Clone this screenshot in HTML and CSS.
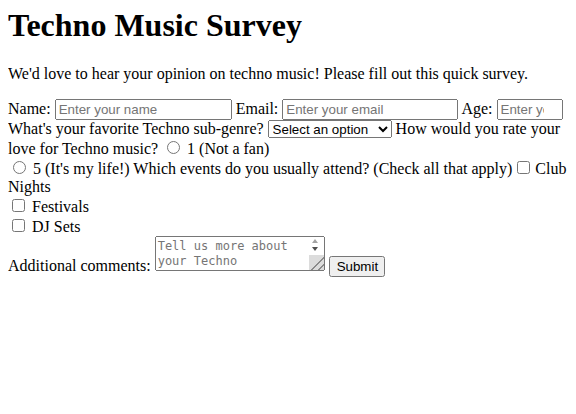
FILE: index.html
```html
<!DOCTYPE html>
<html>
<head>
<meta charset="utf-8">
<title>Techno Music Survey</title>
<link rel="stylesheet" href="styles.css">
</head>
<body>
<h1>Techno Music Survey</h1>
<p>We'd love to hear your opinion on techno music! Please fill out this quick survey.</p>
<form>
<label for="name">Name:</label> <input type="text" id="name" class="name" placeholder="Enter your name"> <label for="email">Email:</label> <input type="email" id="email" class="email" placeholder="Enter your email"> <label for="age">Age:</label> <input type="number" id="age" class="age" placeholder="Enter your age">
<label for="genre">What's your favorite Techno sub-genre?</label> <select id="genre" class="genre"><option>Select an option</option><option>Detroit</option><option>Minimal</option></select>
<label>How would you rate your love for Techno music?</label> <input type="radio" name="rate" id="r1"> <label for="r1">1 (Not a fan)</label><br>
<input type="radio" name="rate" id="r5"> <label for="r5">5 (It's my life!)</label>
<label>Which events do you usually attend? (Check all that apply)</label> <input type="checkbox" id="c1" class="tight"> <label for="c1">Club Nights</label><br>
<input type="checkbox" id="c2"> <label for="c2">Festivals</label><br>
<input type="checkbox" id="c3"> <label for="c3">DJ Sets</label><br>
<label for="comments">Additional comments:</label> <textarea id="comments" class="comments" placeholder="Tell us more about your Techno experience..."></textarea><span class="sb-anchor"><span class="sb-up"></span><span class="sb-down"></span></span> <button type="submit" class="submit">Submit</button>
</form>
</body>
</html>
```
FILE: styles.css
```css
body {
  margin: 7px 8px 8px;
  font-family: "Liberation Serif", "Times New Roman", serif;
}
h1 {
  margin-top: 0;
}
input, select, button {
  font-family: "Liberation Sans", Arial, sans-serif;
  box-sizing: border-box;
}
.name {
  width: 177px;
  height: 21px;
}
.email {
  width: 176px;
  height: 21px;
}
.age {
  width: 66px;
  height: 21px;
}
.genre {
  width: 124px;
  height: 18px;
}
.tight {
  margin-left: 1px;
  margin-right: 1px;
}
.comments {
  box-sizing: border-box;
  width: 170px;
  height: 35px;
  font-family: "DejaVu Sans Mono", "Liberation Mono", monospace;
  font-size: 12px;
  line-height: 15px;
  overflow-y: scroll;
}
.comments::placeholder {
  color: #757575;
}
.comments::-webkit-scrollbar {
  width: 15px;
  background: #f0f0f0;
}
.comments::-webkit-scrollbar-track {
  background: linear-gradient(#f0f0f0 16px, #dcdcdc 16px);
}
.comments::-webkit-scrollbar-thumb {
  background: transparent;
}
.comments::-webkit-scrollbar-corner {
  background: #dcdcdc;
}
.comments::-webkit-resizer {
  background-color: #dcdcdc;
  background-image: linear-gradient(135deg, transparent 55%, #8a8a8a 55%, #8a8a8a 62%, transparent 62%, transparent 78%, #8a8a8a 78%, #8a8a8a 85%, transparent 85%);
}
.sb-anchor {
  position: relative;
  display: inline-block;
  width: 0;
  height: 0;
}
.sb-up,
.sb-down {
  position: absolute;
  left: -13px;
  width: 0;
  height: 0;
  border-left: 3.5px solid transparent;
  border-right: 3.5px solid transparent;
}
.sb-up {
  top: -32px;
  border-bottom: 4px solid #a3a3a3;
}
.sb-down {
  top: -24px;
  border-top: 4px solid #505050;
}
.submit {
  width: 56px;
  height: 21px;
}
```
